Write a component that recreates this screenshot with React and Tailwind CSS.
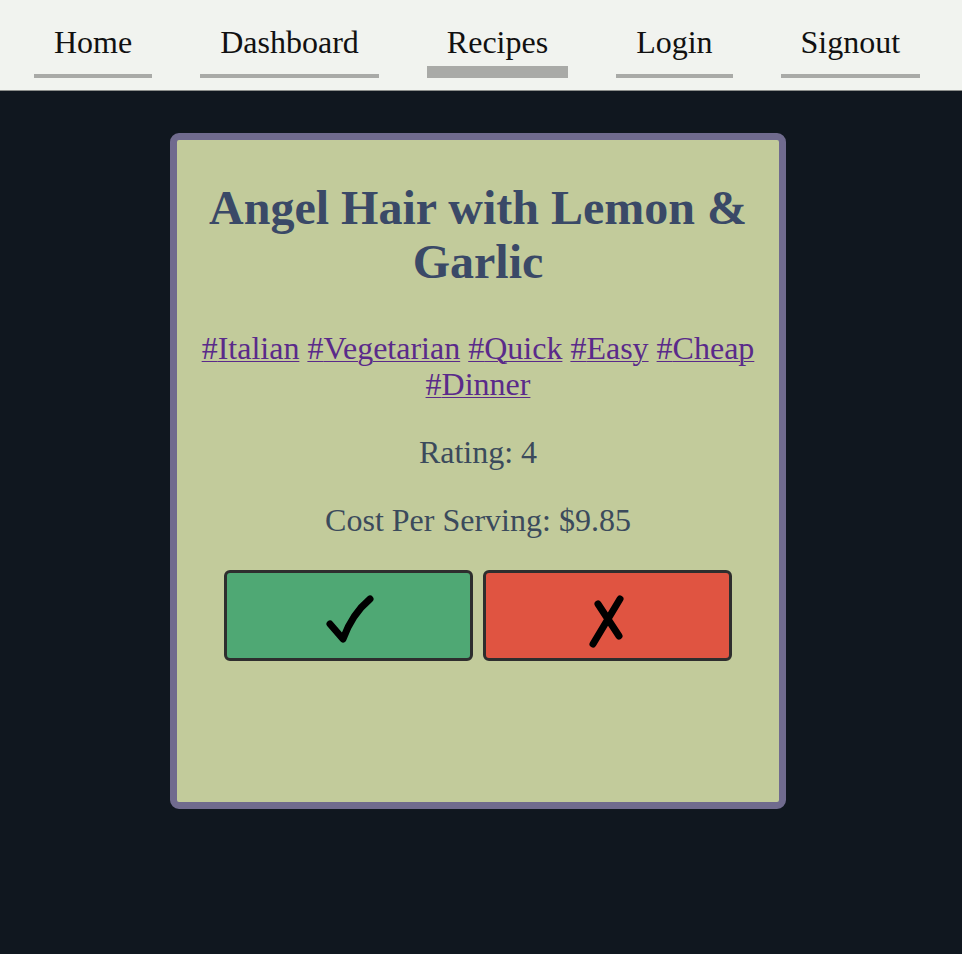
const links = [
  { name: "Home", active: false },
  { name: "Dashboard", active: false },
  { name: "Recipes", active: true },
  { name: "Login", active: false },
  { name: "Signout", active: false },
];

const tags = ["Italian", "Vegetarian", "Quick", "Easy", "Cheap", "Dinner"];

const NavBar = () => (
  <nav className="h-[91px] bg-[#f1f3ef] border-b border-[#8c8e8b] flex items-start gap-[48px] pl-[34px]">
    {links.map((link) => (
      <a
        key={link.name}
        href="#"
        className={
          link.active
            ? "block px-[20px] pt-[24px] pb-[18px] text-[32px] leading-[36px] text-[#111] shadow-[inset_0_-12px_0_#a9aaa7]"
            : "block px-[20px] pt-[24px] pb-[18px] text-[32px] leading-[36px] text-[#111] shadow-[inset_0_-4px_0_#a9aaa7]"
        }
      >
        {link.name}
      </a>
    ))}
  </nav>
);

const CheckMark = () => (
  <svg viewBox="0 0 243 85" className="w-full h-full" aria-label="✓">
    <path d="M103 51 L116 66 Q125 41 143 26" fill="none" stroke="#000" strokeWidth="7" strokeLinecap="round" strokeLinejoin="round" />
  </svg>
);

const CrossMark = () => (
  <svg viewBox="0 0 243 85" className="w-full h-full" aria-label="✗">
    <path d="M134 26 L107 71 M112 31 L133 63" fill="none" stroke="#000" strokeWidth="7" strokeLinecap="round" />
  </svg>
);

const RecipeCard = () => (
  <div className="ml-[170px] mt-[42px] w-[616px] h-[676px] bg-[#c2cb9b] border-[7px] border-[#706b8e] rounded-[9px] flex flex-col items-center text-center px-[13px] pt-[41px]">
    <h1 className="text-[48px] leading-[54px] font-bold text-[#3a4967]">
      Angel Hair with Lemon &amp; Garlic
    </h1>
    <div className="mt-[41px] text-[32px] leading-[36px] text-[#5a2a8a]">
      {tags.map((tag, i) => (
        <span key={tag}>
          <a href="#" className="underline decoration-1 underline-offset-2">
            #{tag}
          </a>
          {i < tags.length - 1 ? " " : ""}
        </span>
      ))}
    </div>
    <p className="mt-[32px] text-[32px] leading-[36px] text-[#3b4a5c]">Rating: 4</p>
    <p className="mt-[32px] text-[32px] leading-[36px] text-[#3b4a5c]">Cost Per Serving: $9.85</p>
    <div className="mt-[32px] flex gap-[10px]">
      <button className="w-[249px] h-[91px] bg-[#4fa874] border-[3px] border-[#2e2e2e] rounded-[6px] flex">
        <CheckMark />
      </button>
      <button className="w-[249px] h-[91px] bg-[#e05441] border-[3px] border-[#2e2e2e] rounded-[6px] flex">
        <CrossMark />
      </button>
    </div>
  </div>
);

export default function App() {
  return (
    <div className="min-h-[954px] bg-[#10171f] font-['Liberation_Serif','Times_New_Roman',serif]">
      <NavBar />
      <RecipeCard />
    </div>
  );
}
